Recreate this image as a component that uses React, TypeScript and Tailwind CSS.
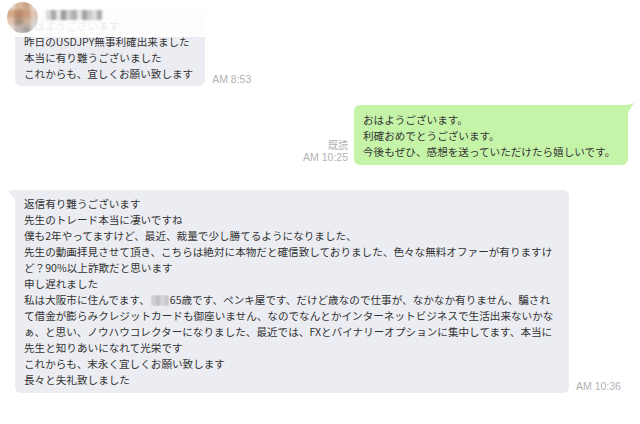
import React from "react";

const jp = { fontFamily: '"Noto Sans CJK JP", "Noto Sans", sans-serif' };
const lat = { fontFamily: '"Liberation Sans", Arial, sans-serif' };

const bigLines: React.ReactNode[] = [
  "返信有り難うございます",
  "先生のトレード本当に凄いですね",
  "僕も2年やってますけど、最近、裁量で少し勝てるようになりました、",
  "先生の動画拝見させて頂き、こちらは絶対に本物だと確信致しておりました、色々な無料オファーが有りますけ",
  "ど？90%以上詐欺だと思います",
  "申し遅れました",
  <>
    私は大阪市に住んでます、
    <span className="inline-block align-middle w-[18px] h-[11px] mx-[1px] relative -top-[1px] overflow-hidden">
      <span className="absolute inset-0 flex blur-[1px]">
        <span className="w-[5px] h-full bg-[#cfcfd4]" />
        <span className="w-[4px] h-full bg-[#bdbdc3]" />
        <span className="w-[5px] h-full bg-[#d6d6da]" />
        <span className="w-[4px] h-full bg-[#c4c4ca]" />
      </span>
    </span>
    65歳です、ペンキ屋です、だけど歳なので仕事が、なかなか有りません、騙され
  </>,
  "て借金が膨らみクレジットカードも御座いません、なのでなんとかインターネットビジネスで生活出来ないかな",
  "ぁ、と思い、ノウハウコレクターになりました、最近では、FXとバイナリーオプションに集中してます、本当に",
  "先生と知りあいになれて光栄です",
  "これからも、末永く宜しくお願い致します",
  "長々と失礼致しました",
];

function Avatar() {
  const cols = [
    ["#efe4dc", "#d8b89c", "#c9a487", "#eadbd0"],
    ["#d5a989", "#b98a6c", "#c99b7c", "#e0c5b2"],
    ["#e3c7b1", "#a9917f", "#cdb09a", "#d9cfc9"],
    ["#e9e4e2", "#bfb6b2", "#a8a2a1", "#d7d2d0"],
  ];
  return (
    <div className="w-[31px] h-[31px] rounded-full overflow-hidden">
      <div className="grid grid-cols-4 w-full h-full blur-[1.5px] scale-110">
        {cols.flat().map((c, i) => (
          <div key={i} style={{ backgroundColor: c }} />
        ))}
      </div>
    </div>
  );
}

function NameBlur() {
  const c = ["#d9d9d9", "#a8a8a8", "#e4e4e4", "#9c9c9c", "#cfcfcf", "#b0b0b0", "#e6e6e6", "#a3a3a3", "#c8c8c8", "#dedede", "#adadad"];
  return (
    <div className="flex h-[10px] w-[56px] blur-[0.8px]">
      {c.map((x, i) => (
        <div key={i} className="flex-1 h-full" style={{ backgroundColor: x }} />
      ))}
    </div>
  );
}

export default function App() {
  return (
    <div className="relative w-[640px] h-[424px] bg-white overflow-hidden text-[#333]" style={jp}>
      <div className="flex flex-col">
        {/* first incoming */}
        <div className="flex items-end mt-[10px] pl-[15px]">
          <div className="bg-[#ebedf2] rounded-[6px] pl-[9px] pr-[12px] pt-[8px] pb-[4px] text-[10.6px] leading-[16px] whitespace-nowrap">
            <div>おはようございます</div>
            <div>昨日のUSDJPY無事利確出来ました</div>
            <div>本当に有り難うございました</div>
            <div>これからも、宜しくお願い致します</div>
          </div>
          <div className="ml-[7px] mb-[1px] text-[10.5px] leading-[12px] text-[#b2b2b2]" style={lat}>
            AM 8:53
          </div>
        </div>

        {/* outgoing */}
        <div className="flex items-end justify-end mt-[19px] pr-[12px]">
          <div className="mr-[6px] mb-[1px] flex flex-col items-end text-[10.5px] leading-[13px] text-[#b2b2b2]" style={lat}>
            <span style={jp} className="text-[10px]">既読</span>
            <span>AM 10:25</span>
          </div>
          <div className="relative w-[274px] bg-[#c5f3a8] rounded-[6px] rounded-tr-none pl-[9px] pt-[7px] pb-[5px] text-[10.6px] leading-[16px] whitespace-nowrap">
            <div>おはようございます。</div>
            <div>利確おめでとうございます。</div>
            <div>今後もぜひ、感想を送っていただけたら嬉しいです。</div>
            <svg className="absolute -right-[7px] -top-[2px]" width="8" height="12" viewBox="0 0 8 12">
              <path d="M0 2 L7 0 Q4 5 0 11 Z" fill="#c5f3a8" />
            </svg>
          </div>
        </div>

        {/* big incoming */}
        <div className="flex items-end mt-[25px] pl-[15px]">
          <div className="relative w-[554px] bg-[#ebedf2] rounded-[6px] rounded-tl-none pl-[9px] pt-[6px] pb-[5px] text-[10.6px] leading-[16px] whitespace-nowrap">
            {bigLines.map((l, i) => (
              <div key={i}>{l}</div>
            ))}
            <svg className="absolute -left-[7px] top-0" width="8" height="12" viewBox="0 0 8 12">
              <path d="M8 0 L0 1 Q4 5 8 11 Z" fill="#ebedf2" />
            </svg>
          </div>
          <div className="ml-[7px] mb-[1px] text-[10.5px] leading-[12px] text-[#b2b2b2]" style={lat}>
            AM 10:36
          </div>
        </div>
      </div>

      {/* header overlay */}
      <div className="absolute left-0 top-0 w-full h-[37px] bg-white/90" />
      <div className="absolute left-[7px] top-[2px] flex items-start gap-[8px]">
        <Avatar />
        <div className="mt-[8px]">
          <NameBlur />
        </div>
      </div>
    </div>
  );
}
